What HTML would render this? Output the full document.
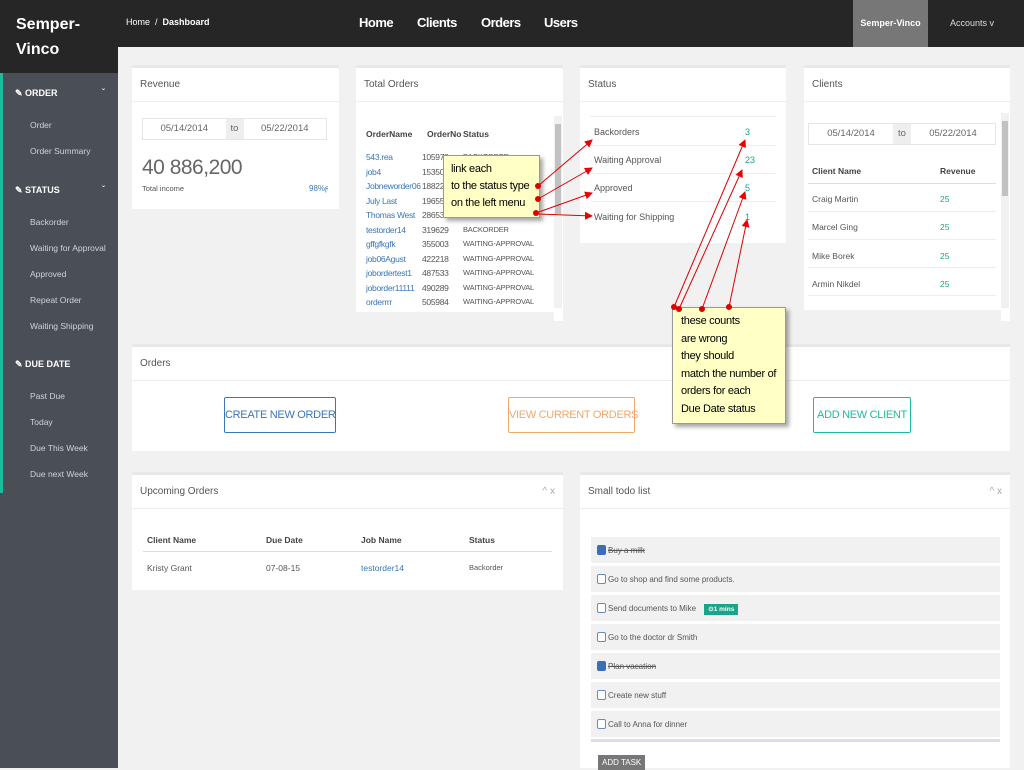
<!DOCTYPE html>
<html><head><meta charset="utf-8"><style>
*{box-sizing:border-box;margin:0;padding:0}
body{width:1024px;height:768px;overflow:hidden;background:#f1f1f1;font-family:"Liberation Sans",sans-serif;font-size:10px;color:#555;position:relative}
div,span{white-space:nowrap}
.top{position:absolute;left:0;top:0;width:1024px;height:47px;background:#262626;color:#fff}
.abs{position:absolute}
.side{position:absolute;left:0;top:47px;width:118px;height:721px;background:#4a4e57}
.logo{position:absolute;left:0;top:0;width:118px;height:73px;background:#262626;color:#fff;font-weight:bold;font-size:16px;line-height:25px;padding:12px 0 0 16px}
.grn{position:absolute;left:0;top:73px;width:3px;height:420px;background:#1abc9c}
.sh{position:absolute;left:15px;color:#fff;font-weight:bold;font-size:9px}
.sh i{position:absolute;left:87px;font-style:normal;font-size:8px}
.si{position:absolute;left:30px;color:#d0d3d8;font-size:8.5px}
.p{position:absolute;background:#fff;border-top:3px solid #e8e8e8}
.ph{height:34px;border-bottom:1px solid #eee;padding:11px 0 0 8px;font-size:10px;color:#555}
.lk{color:#3a76b6}
.tl{color:#1aa58a}
.date{position:absolute;height:22px;border:1px solid #e5e5e5;font-size:9.5px;color:#666;display:flex}
.date span{flex:1;text-align:center;line-height:20px}
.date b{width:18px;background:#eee;font-weight:normal;text-align:center;line-height:20px}
.btn{position:absolute;height:36px;border:1px solid;text-align:center;line-height:34px;font-size:11px;border-radius:2px;letter-spacing:-.3px}
.todo{position:absolute;left:11px;width:409px;height:26px;background:#f1f1f1;font-size:8px;padding:9px 0 0 17px;color:#555}
.cb{position:absolute;left:6px;top:8px;width:9px;height:10px;border:1px solid #6a8bb8;border-radius:2px;background:#fff}
.cb.on{background:#3a6fb6;border-color:#3a6fb6}
.note{position:absolute;background:#ffffc6;border:1px solid #999;box-shadow:3px 3px 4px rgba(0,0,0,.35);color:#000;font-size:11px;line-height:17px;letter-spacing:-.3px}
</style></head><body>
<div class="top">
 <div class="abs" style="left:126px;top:17px;font-size:9px">Home &nbsp;/&nbsp; <b>Dashboard</b></div>
 <div class="abs" style="left:359px;top:15px;font-size:13px;font-weight:bold;letter-spacing:-.5px">Home</div>
 <div class="abs" style="left:417px;top:15px;font-size:13px;font-weight:bold;letter-spacing:-.5px">Clients</div>
 <div class="abs" style="left:481px;top:15px;font-size:13px;font-weight:bold;letter-spacing:-.5px">Orders</div>
 <div class="abs" style="left:544px;top:15px;font-size:13px;font-weight:bold;letter-spacing:-.5px">Users</div>
 <div class="abs" style="left:853px;top:0;width:75px;height:47px;background:#777;font-size:9px;font-weight:bold;text-align:center;line-height:47px">Semper-Vinco</div>
 <div class="abs" style="left:950px;top:18px;font-size:9px;color:#ddd">Accounts v</div>
</div>
<div class="side"></div>
<div class="logo">Semper-<br>Vinco</div>
<div class="grn"></div>
<div class="sh" style="top:88px">&#9998; ORDER<i>&#711;</i></div>
<div class="si" style="top:120px">Order</div>
<div class="si" style="top:146px">Order Summary</div>
<div class="sh" style="top:185px">&#9998; STATUS<i>&#711;</i></div>
<div class="si" style="top:217px">Backorder</div>
<div class="si" style="top:243px">Waiting for Approval</div>
<div class="si" style="top:269px">Approved</div>
<div class="si" style="top:295px">Repeat Order</div>
<div class="si" style="top:321px">Waiting Shipping</div>
<div class="sh" style="top:359px">&#9998; DUE DATE</div>
<div class="si" style="top:391px">Past Due</div>
<div class="si" style="top:417px">Today</div>
<div class="si" style="top:443px">Due This Week</div>
<div class="si" style="top:469px">Due next Week</div>

<div class="p" style="left:132px;top:65px;width:207px;height:144px"><div class="ph">Revenue</div>
 <div class="date" style="left:10px;top:50px;width:185px"><span>05/14/2014</span><b>to</b><span>05/22/2014</span></div>
 <div class="abs" style="left:10px;top:88px;font-size:21px;color:#666;letter-spacing:-.5px">40 886,200</div>
 <div class="abs" style="left:10px;top:116px;font-size:7.5px">Total income</div>
 <div class="abs lk" style="left:177px;top:116px;font-size:8px">98%&#989;</div>
</div>

<div class="p" style="left:356px;top:65px;width:207px;height:256px"><div class="ph">Total Orders</div>
 <div class="abs" style="left:198px;top:48px;width:8px;height:192px;background:#f1f1f1"></div>
 <div class="abs" style="left:199px;top:56px;width:6px;height:90px;background:#c1c1c1"></div>
 <div class="abs" style="left:0;top:244px;width:198px;height:11px;background:#f1f1f1"></div>
 <div class="abs" style="left:10px;top:61px;font-size:8.5px;font-weight:bold;color:#444">OrderName</div>
 <div class="abs" style="left:71px;top:61px;font-size:8.5px;font-weight:bold;color:#444">OrderNo</div>
 <div class="abs" style="left:107px;top:61px;font-size:8.5px;font-weight:bold;color:#444">Status</div>
 <div class="abs lk" style="left:10px;top:82px;font-size:8.5px;line-height:14.5px;letter-spacing:-.3px">543.rea<br>job4<br>Jobneworder06<br>July Last<br>Thomas West<br>testorder14<br>gffgfkgfk<br>job06Agust<br>jobordertest1<br>joborder11111<br>orderrrr</div>
 <div class="abs" style="left:66px;top:82px;font-size:8.5px;line-height:14.5px;letter-spacing:-.3px">105978<br>15350<br>18822<br>19655<br>28653<br>319629<br>355003<br>422218<br>487533<br>490289<br>505984</div>
 <div class="abs" style="left:107px;top:82px;font-size:7.5px;line-height:14.5px;letter-spacing:-.2px">BACKORDER<br><br><br><br><br>BACKORDER<br>WAITING-APPROVAL<br>WAITING-APPROVAL<br>WAITING-APPROVAL<br>WAITING-APPROVAL<br>WAITING-APPROVAL</div>
</div>

<div class="p" style="left:580px;top:65px;width:206px;height:178px"><div class="ph">Status</div>
 <div class="abs" style="left:10px;top:48px;width:186px;border-top:1px solid #eee"></div>
 <div class="abs" style="left:14px;top:59px;font-size:9px">Backorders</div><div class="abs tl" style="left:165px;top:59px;font-size:9px">3</div>
 <div class="abs" style="left:10px;top:77px;width:186px;border-top:1px solid #eee"></div>
 <div class="abs" style="left:14px;top:87px;font-size:9px">Waiting Approval</div><div class="abs tl" style="left:165px;top:87px;font-size:9px">23</div>
 <div class="abs" style="left:10px;top:105px;width:186px;border-top:1px solid #eee"></div>
 <div class="abs" style="left:14px;top:115px;font-size:9px">Approved</div><div class="abs tl" style="left:165px;top:115px;font-size:9px">5</div>
 <div class="abs" style="left:10px;top:133px;width:186px;border-top:1px solid #eee"></div>
 <div class="abs" style="left:14px;top:144px;font-size:9px">Waiting for Shipping</div><div class="abs tl" style="left:165px;top:144px;font-size:9px">1</div>
</div>

<div class="p" style="left:804px;top:65px;width:206px;height:256px"><div class="ph">Clients</div>
 <div class="abs" style="left:197px;top:45px;width:8px;height:195px;background:#f1f1f1"></div>
 <div class="abs" style="left:198px;top:53px;width:6px;height:75px;background:#c1c1c1"></div>
 <div class="abs" style="left:0;top:242px;width:197px;height:12px;background:#f1f1f1"></div>
 <div class="date" style="left:4px;top:55px;width:188px"><span>05/14/2014</span><b>to</b><span>05/22/2014</span></div>
 <div class="abs" style="left:8px;top:98px;font-size:8.5px;font-weight:bold;color:#444">Client Name</div>
 <div class="abs" style="left:136px;top:98px;font-size:8.5px;font-weight:bold;color:#444">Revenue</div>
 <div class="abs" style="left:4px;top:115px;width:188px;border-top:1px solid #ddd"></div>
 <div class="abs" style="left:8px;top:126px;font-size:8.5px">Craig Martin</div><div class="abs tl" style="left:136px;top:126px;font-size:8.5px">25</div>
 <div class="abs" style="left:4px;top:143px;width:188px;border-top:1px solid #eee"></div>
 <div class="abs" style="left:8px;top:154px;font-size:8.5px">Marcel Ging</div><div class="abs tl" style="left:136px;top:154px;font-size:8.5px">25</div>
 <div class="abs" style="left:4px;top:171px;width:188px;border-top:1px solid #eee"></div>
 <div class="abs" style="left:8px;top:183px;font-size:8.5px">Mike Borek</div><div class="abs tl" style="left:136px;top:183px;font-size:8.5px">25</div>
 <div class="abs" style="left:4px;top:199px;width:188px;border-top:1px solid #eee"></div>
 <div class="abs" style="left:8px;top:211px;font-size:8.5px">Armin Nikdel</div><div class="abs tl" style="left:136px;top:211px;font-size:8.5px">25</div>
 <div class="abs" style="left:4px;top:227px;width:188px;border-top:1px solid #eee"></div>
</div>

<div class="p" style="left:132px;top:344px;width:878px;height:107px"><div class="ph">Orders</div>
 <div class="btn" style="left:92px;top:50px;width:112px;color:#3a76b6;border-color:#3a76b6">CREATE NEW ORDER</div>
 <div class="btn" style="left:376px;top:50px;width:127px;color:#f0a868;border-color:#f0a868">VIEW CURRENT ORDERS</div>
 <div class="btn" style="left:681px;top:50px;width:98px;color:#1abc9c;border-color:#1abc9c">ADD NEW CLIENT</div>
</div>

<div class="p" style="left:132px;top:472px;width:431px;height:118px"><div class="ph">Upcoming Orders<span style="position:absolute;right:8px;color:#aaa">^ x</span></div>
 <div class="abs" style="left:15px;top:60px;font-size:8.5px;font-weight:bold;color:#444">Client Name</div>
 <div class="abs" style="left:134px;top:60px;font-size:8.5px;font-weight:bold;color:#444">Due Date</div>
 <div class="abs" style="left:229px;top:60px;font-size:8.5px;font-weight:bold;color:#444">Job Name</div>
 <div class="abs" style="left:337px;top:60px;font-size:8.5px;font-weight:bold;color:#444">Status</div>
 <div class="abs" style="left:11px;top:76px;width:409px;border-top:1px solid #ddd"></div>
 <div class="abs" style="left:15px;top:88px;font-size:8.5px">Kristy Grant</div>
 <div class="abs" style="left:134px;top:88px;font-size:8.5px">07-08-15</div>
 <div class="abs lk" style="left:229px;top:88px;font-size:8.5px">testorder14</div>
 <div class="abs" style="left:337px;top:88px;font-size:7.5px">Backorder</div>
</div>

<div class="p" style="left:580px;top:472px;width:430px;height:296px"><div class="ph">Small todo list<span style="position:absolute;right:8px;color:#aaa">^ x</span></div>
 <div class="todo" style="top:62px"><i class="cb on"></i><s>Buy a milk</s></div>
 <div class="todo" style="top:91px"><i class="cb"></i>Go to shop and find some products.</div>
 <div class="todo" style="top:120px"><i class="cb"></i>Send documents to Mike <span style="background:#1aa58a;color:#fff;font-size:6.5px;padding:2px 4px;margin-left:6px;font-weight:bold">&#8857;1 mins</span></div>
 <div class="todo" style="top:149px"><i class="cb"></i>Go to the doctor dr Smith</div>
 <div class="todo" style="top:178px"><i class="cb on"></i><s>Plan vacation</s></div>
 <div class="todo" style="top:207px"><i class="cb"></i>Create new stuff</div>
 <div class="todo" style="top:236px"><i class="cb"></i>Call to Anna for dinner</div>
 <div class="abs" style="left:11px;top:264px;width:409px;height:3px;background:#dde"></div>
 <div class="abs" style="left:18px;top:280px;background:#777;color:#fff;font-size:8px;padding:3px 4px">ADD TASK</div>
</div>

<div class="note" style="left:443px;top:155px;width:97px;height:63px;padding:5px 0 0 7px">link each<br>to the status type<br>on the left menu</div>
<div class="note" style="left:672px;top:307px;width:114px;height:117px;padding:5px 0 0 8px;line-height:17.5px">these counts<br>are wrong<br>they should<br>match the number of<br>orders for each<br>Due Date status</div>
<svg class="abs" style="left:0;top:0" width="1024" height="768">
<defs><marker id="a" markerWidth="8" markerHeight="8" refX="7" refY="4" orient="auto"><path d="M0,0L8,4L0,8z" fill="#e00"/></marker></defs>
<g stroke="#d00" stroke-width="1" fill="none" marker-end="url(#a)">
<line x1="538" y1="186" x2="592" y2="140"/><line x1="538" y1="199" x2="592" y2="168"/>
<line x1="536" y1="213" x2="592" y2="193"/><line x1="538" y1="214" x2="592" y2="216"/>
<line x1="674" y1="307" x2="745" y2="140"/><line x1="679" y1="309" x2="742" y2="170"/>
<line x1="702" y1="309" x2="745" y2="192"/><line x1="729" y1="307" x2="747" y2="220"/>
</g>
<g fill="#d00"><circle cx="538" cy="186" r="3"/><circle cx="538" cy="199" r="3"/><circle cx="536" cy="213" r="3"/><circle cx="674" cy="307" r="3"/><circle cx="679" cy="309" r="3"/><circle cx="702" cy="309" r="3"/><circle cx="729" cy="307" r="3"/></g>
</svg>
</body></html>
